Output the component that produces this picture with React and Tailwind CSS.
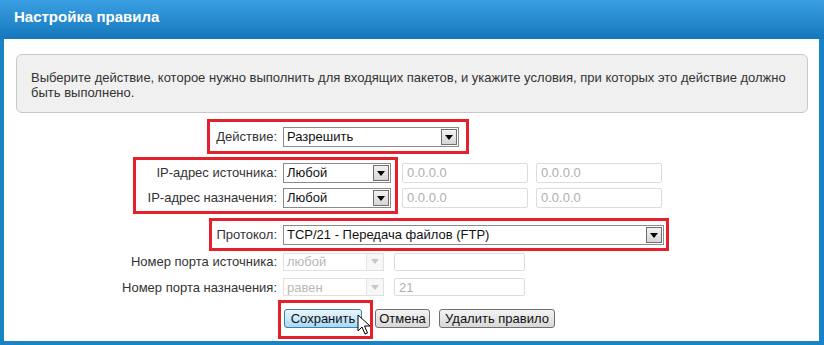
import React from "react";

const Arrow = ({ disabled }) => (
  <span
    className={
      disabled
        ? "flex h-full w-[17px] items-center justify-center border-l border-[#e4e4e4] bg-[#f7f7f7]"
        : "m-[1px] flex h-[16px] w-[16px] items-center justify-center border border-[#707070] bg-gradient-to-b from-[#f2f2f2] to-[#d6d6d6]"
    }
  >
    <svg width="8" height="5" viewBox="0 0 8 5">
      <path d="M0 0h8L4 5z" fill={disabled ? "#c8c8c8" : "#000"} />
    </svg>
  </span>
);

const Select = ({ value, width, disabled }) => (
  <div
    className={
      disabled
        ? "flex h-[18px] items-center justify-between border border-[#e0e0e0] bg-white"
        : "flex h-[20px] items-center justify-between border border-[#8a8a8a] bg-white"
    }
    style={{ width }}
  >
    <span className={disabled ? "pl-[3px] text-[#b8b8b8]" : "pl-[3px] text-[#111]"}>{value}</span>
    <Arrow disabled={disabled} />
  </div>
);

const Field = ({ value, placeholder, width, h = "h-[20px]" }) => (
  <div
    className={`flex ${h} items-center rounded-[2px] border border-[#dcdcdc] bg-white pl-[4px] text-[#b0b0b0]`}
    style={{ width }}
  >
    {value || placeholder}
  </div>
);

const Row = ({ label, children, className }) => (
  <div className={`flex items-center ${className}`}>
    <div className="w-[279px] pr-[6px] text-right text-[#333]">{label}</div>
    {children}
  </div>
);

const Btn = ({ children, primary, w }) => (
  <button
    className={
      primary
        ? `flex h-[19px] ${w} items-center justify-center rounded-[3px] border border-[#3c7fb1] bg-gradient-to-b from-[#eaf6fd] to-[#a7d9f5] text-[#111]`
        : `flex h-[19px] ${w} items-center justify-center rounded-[3px] border border-[#707070] bg-gradient-to-b from-[#f4f4f4] to-[#d8d8d8] text-[#111]`
    }
  >
    {children}
  </button>
);

export default function App() {
  return (
    <div
      className="relative flex h-[345px] w-[824px] flex-col bg-[#1a82c7] text-[13px]"
      style={{ fontFamily: '"Liberation Sans", Arial, sans-serif' }}
    >
      <div className="flex h-[39px] items-center bg-gradient-to-b from-[#3a9fe2] to-[#1478be] pb-[4px] pl-[14px] text-[15px] font-bold text-white">
        Настройка правила
      </div>

      <div className="ml-[4px] flex h-[302px] w-[815px] flex-col bg-white">
        <div className="ml-[12px] mt-[15px] h-[59px] w-[792px] rounded-[6px] border border-[#c8c8c8] bg-[#f0f0f0] px-[14px] pt-[15px] leading-[15px] text-[#333]">
          Выберите действие, которое нужно выполнить для входящих пакетов, и укажите условия, при которых это действие должно быть выполнено.
        </div>

        <Row label="Действие:" className="mt-[14px]">
          <Select value="Разрешить" width={176} />
        </Row>

        <Row label="IP-адрес источника:" className="mt-[16px]">
          <Select value="Любой" width={108} />
          <div className="ml-[11px]"><Field placeholder="0.0.0.0" width={126} /></div>
          <div className="ml-[8px]"><Field placeholder="0.0.0.0" width={126} /></div>
        </Row>
        <Row label="IP-адрес назначения:" className="mt-[5px]">
          <Select value="Любой" width={108} />
          <div className="ml-[11px]"><Field placeholder="0.0.0.0" width={126} /></div>
          <div className="ml-[8px]"><Field placeholder="0.0.0.0" width={126} /></div>
        </Row>

        <Row label="Протокол:" className="mt-[17px]">
          <Select value="TCP/21 - Передача файлов (FTP)" width={381} />
        </Row>

        <Row label="Номер порта источника:" className="mt-[7px]">
          <Select value="любой" width={101} disabled />
          <div className="ml-[10px]"><Field width={131} h="h-[18px]" /></div>
        </Row>
        <Row label="Номер порта назначения:" className="mt-[6px]">
          <Select value="равен" width={101} disabled />
          <div className="ml-[10px]"><Field value="21" width={131} h="h-[18px]" /></div>
        </Row>

        <div className="ml-[280px] mt-[12px] flex gap-[13px]">
          <Btn primary w="w-[78px]">Сохранить</Btn>
          <div className="flex gap-[9px]">
            <Btn w="w-[55px]">Отмена</Btn>
            <Btn w="w-[116px]">Удалить правило</Btn>
          </div>
        </div>
      </div>

      <div className="pointer-events-none absolute left-[207px] top-[119px] h-[35px] w-[262px] border-[3px] border-[#e3202b]" />
      <div className="pointer-events-none absolute left-[133px] top-[157px] h-[57px] w-[265px] border-[3px] border-[#e3202b]" />
      <div className="pointer-events-none absolute left-[209px] top-[218px] h-[33px] w-[460px] border-[3px] border-[#e3202b]" />
      <div className="pointer-events-none absolute left-[278px] top-[300px] h-[39px] w-[95px] border-[3px] border-[#e3202b]" />

      <svg className="absolute left-[357px] top-[314px]" width="14" height="22" viewBox="0 0 14 22">
        <path d="M1 1v16l4-4 3 7 2.5-1-3-7h5.5z" fill="#fff" stroke="#000" strokeWidth="1" strokeLinejoin="round" />
      </svg>
    </div>
  );
}
